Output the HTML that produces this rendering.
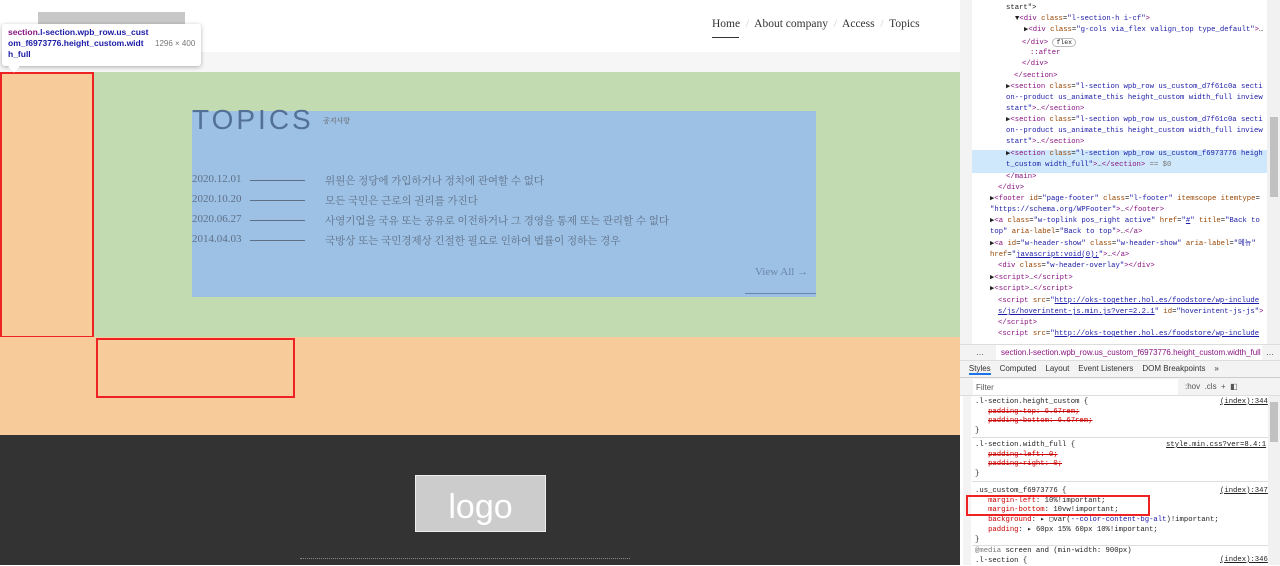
<!DOCTYPE html>
<html><head><meta charset="utf-8"><style>
*{margin:0;padding:0;box-sizing:border-box}
body{width:1280px;height:565px;overflow:hidden;position:relative;background:#fff;font-family:"Liberation Serif","Noto Serif CJK SC",serif}
.a{position:absolute}
.m{font-family:"Liberation Mono","DejaVu Sans Mono",monospace;font-size:7.25px;line-height:11px;white-space:pre;color:#222}
.t{color:#881280}.n{color:#994500}.v{color:#1a1aa6}.g{color:#777}.u{color:#1a1aa6;text-decoration:underline}
.row{position:absolute;left:192px;font-size:11px;color:#5e6f87}
.d{position:absolute;left:250px;width:55px;height:1px;background:#5e6f87;top:7px}
</style></head><body>
<!-- header -->
<div class="a" style="left:0;top:0;width:960px;height:52px;background:#fff"></div>
<div class="a" style="left:0;top:52px;width:960px;height:20px;background:#f6f6f6"></div>
<div class="a" style="left:38px;top:12px;width:147px;height:30px;background:#c8c8c8"></div>
<div class="a" style="left:712px;top:18px;font-size:11.5px;color:#333;white-space:nowrap">Home <span style="color:#ccc">&nbsp;/&nbsp;</span> About company <span style="color:#ccc">&nbsp;/&nbsp;</span> Access <span style="color:#ccc">&nbsp;/&nbsp;</span> Topics</div>
<div class="a" style="left:712px;top:37px;width:27px;height:1px;background:#333"></div>
<!-- section -->
<div class="a" style="left:0;top:72px;width:960px;height:266px;background:#c2dbb1"></div>
<div class="a" style="left:0;top:72px;width:94px;height:266px;background:#f8cb9b;border:2px solid #e22"></div>
<div class="a" style="left:0;top:337px;width:960px;height:98px;background:#f8cb9b"></div>
<div class="a" style="left:96px;top:338px;width:199px;height:60px;border:2px solid #e22"></div>
<div class="a" style="left:192px;top:111px;width:624px;height:186px;background:#9dc1e4"></div>
<div class="a" style="left:192px;top:104px;font-family:'Liberation Sans',sans-serif;font-size:28px;letter-spacing:3px;color:#527195">TOPICS</div>
<div class="a" style="left:323px;top:116px;font-size:7px;color:#555;font-family:'Noto Serif CJK SC',serif">공지사항</div>
<div class="row" style="top:173px">2020.12.01</div><div class="d" style="top:180px"></div><div class="row" style="left:325px;top:173px;font-family:'Noto Serif CJK SC',serif;font-size:10.5px">위원은 정당에 가입하거나 정치에 관여할 수 없다</div>
<div class="row" style="top:193px">2020.10.20</div><div class="d" style="top:200px"></div><div class="row" style="left:325px;top:193px;font-family:'Noto Serif CJK SC',serif;font-size:10.5px">모든 국민은 근로의 권리를 가진다</div>
<div class="row" style="top:213px">2020.06.27</div><div class="d" style="top:220px"></div><div class="row" style="left:325px;top:213px;font-family:'Noto Serif CJK SC',serif;font-size:10.5px">사영기업을 국유 또는 공유로 이전하거나 그 경영을 통제 또는 관리할 수 없다</div>
<div class="row" style="top:233px">2014.04.03</div><div class="d" style="top:240px"></div><div class="row" style="left:325px;top:233px;font-family:'Noto Serif CJK SC',serif;font-size:10.5px">국방상 또는 국민경제상 긴절한 필요로 인하여 법률이 정하는 경우</div>
<div class="a" style="left:755px;top:266px;font-size:11px;color:#6a85a6">View All →</div>
<div class="a" style="left:745px;top:293px;width:71px;height:1px;background:#6a85a6"></div>
<!-- footer -->
<div class="a" style="left:0;top:435px;width:960px;height:130px;background:#333"></div>
<div class="a" style="left:415px;top:475px;width:131px;height:57px;background:#ccc;border:1px solid #eee;color:#fff;font-family:'Liberation Sans',sans-serif;font-size:34px;text-align:center;line-height:62px">logo</div>
<div class="a" style="left:300px;top:558px;width:330px;height:4px;border-top:1px dotted #888"></div>
<!-- tooltip -->
<div class="a" style="left:2px;top:24px;width:199px;height:42px;background:#fff;border-radius:3px;box-shadow:0 1px 4px rgba(0,0,0,.3);font-family:'Liberation Sans',sans-serif;font-size:8.5px;line-height:11px;font-weight:bold;color:#1a1aa6;padding:3px 6px"><span style="color:#881280">section</span>.l-section.wpb_row.us_cust<br>om_f6973776.height_custom.widt<br>h_full<span class="a" style="left:153px;top:14px;font-weight:normal;color:#777;font-size:8px">1296 × 400</span></div>
<div class="a" style="left:10px;top:63px;width:8px;height:8px;background:#fff;transform:rotate(45deg)"></div>
<!-- devtools -->
<div class="a" style="left:960px;top:0;width:320px;height:565px;background:#fff"></div>
<div class="a" style="left:960px;top:0;width:12px;height:345px;background:#f3f3f3"></div>
<div class="a" style="left:1267px;top:0;width:13px;height:345px;background:#f1f1f1"></div>
<div class="a" style="left:1270px;top:117px;width:8px;height:80px;background:#c1c1c1"></div>
<div class="a" style="left:972px;top:150px;width:295px;height:23px;background:#cfe8fc"></div>
<div class="m a" style="left:1006px;top:3px">start"&gt;</div>
<div class="m a" style="left:1015px;top:14px">▼<span class="t">&lt;div </span><span class="n">class</span>=<span class="v">"l-section-h i-cf"</span><span class="t">&gt;</span></div>
<div class="m a" style="left:1024px;top:25px">▶<span class="t">&lt;div </span><span class="n">class</span>=<span class="v">"g-cols via_flex valign_top type_default"</span><span class="t">&gt;</span>…</div>
<div class="m a" style="left:1022px;top:37px"><span class="t">&lt;/div&gt;</span> <span style="border:1px solid #bbb;border-radius:6px;padding:0 3px;font-size:6.5px">flex</span></div>
<div class="m a" style="left:1030px;top:48px"><span class="t">::after</span></div>
<div class="m a" style="left:1022px;top:59px"><span class="t">&lt;/div&gt;</span></div>
<div class="m a" style="left:1014px;top:71px"><span class="t">&lt;/section&gt;</span></div>
<div class="m a" style="left:1006px;top:82px">▶<span class="t">&lt;section </span><span class="n">class</span>=<span class="v">"l-section wpb_row us_custom_d7f61c0a secti
on--product us_animate_this height_custom width_full inview
start"</span><span class="t">&gt;</span>…<span class="t">&lt;/section&gt;</span></div>
<div class="m a" style="left:1006px;top:115px">▶<span class="t">&lt;section </span><span class="n">class</span>=<span class="v">"l-section wpb_row us_custom_d7f61c0a secti
on--product us_animate_this height_custom width_full inview
start"</span><span class="t">&gt;</span>…<span class="t">&lt;/section&gt;</span></div>
<div class="m a" style="left:1006px;top:149px">▶<span class="t">&lt;section </span><span class="n">class</span>=<span class="v">"l-section wpb_row us_custom_f6973776 heigh
t_custom width_full"</span><span class="t">&gt;</span>…<span class="t">&lt;/section&gt;</span> <span class="g">== $0</span></div>
<div class="m a" style="left:1006px;top:172px"><span class="t">&lt;/main&gt;</span></div>
<div class="m a" style="left:998px;top:183px"><span class="t">&lt;/div&gt;</span></div>
<div class="m a" style="left:990px;top:194px">▶<span class="t">&lt;footer </span><span class="n">id</span>=<span class="v">"page-footer"</span> <span class="n">class</span>=<span class="v">"l-footer"</span> <span class="n">itemscope itemtype</span>=
<span class="v">"https://schema.org/WPFooter"</span><span class="t">&gt;</span>…<span class="t">&lt;/footer&gt;</span></div>
<div class="m a" style="left:990px;top:216px">▶<span class="t">&lt;a </span><span class="n">class</span>=<span class="v">"w-toplink pos_right active"</span> <span class="n">href</span>=<span class="v">"<u>#</u>"</span> <span class="n">title</span>=<span class="v">"Back to
top"</span> <span class="n">aria-label</span>=<span class="v">"Back to top"</span><span class="t">&gt;</span>…<span class="t">&lt;/a&gt;</span></div>
<div class="m a" style="left:990px;top:239px">▶<span class="t">&lt;a </span><span class="n">id</span>=<span class="v">"w-header-show"</span> <span class="n">class</span>=<span class="v">"w-header-show"</span> <span class="n">aria-label</span>=<span class="v">"메뉴"</span>
<span class="n">href</span>=<span class="v">"<u>javascript:void(0);</u>"</span><span class="t">&gt;</span>…<span class="t">&lt;/a&gt;</span></div>
<div class="m a" style="left:998px;top:261px"><span class="t">&lt;div </span><span class="n">class</span>=<span class="v">"w-header-overlay"</span><span class="t">&gt;&lt;/div&gt;</span></div>
<div class="m a" style="left:990px;top:273px">▶<span class="t">&lt;script&gt;</span>…<span class="t">&lt;/script&gt;</span>
▶<span class="t">&lt;script&gt;</span>…<span class="t">&lt;/script&gt;</span></div>
<div class="m a" style="left:998px;top:296px"><span class="t">&lt;script </span><span class="n">src</span>=<span class="v">"<u>http://oks-together.hol.es/foodstore/wp-include
s/js/hoverintent-js.min.js?ver=2.2.1</u>"</span> <span class="n">id</span>=<span class="v">"hoverintent-js-js"</span><span class="t">&gt;</span>
<span class="t">&lt;/script&gt;</span>
<span class="t">&lt;script </span><span class="n">src</span>=<span class="v">"<u>http://oks-together.hol.es/foodstore/wp-include</u></span></div>
<!-- breadcrumb -->
<div class="a" style="left:960px;top:344px;width:320px;height:17px;background:#f3f3f3;border-top:1px solid #ddd;border-bottom:1px solid #ddd;font-family:'Liberation Sans',sans-serif;font-size:8px;line-height:15px;color:#333"><span style="margin-left:16px">…</span><span class="a" style="left:36px;top:0;width:266px;height:15px;background:#fff;padding-left:5px;color:#881280">section.l-section.wpb_row.us_custom_f6973776.height_custom.width_full</span><span class="a" style="left:306px;top:0">…</span></div>
<div class="a" style="left:960px;top:361px;width:320px;height:17px;background:#f3f3f3;border-bottom:1px solid #ccc;font-family:'Liberation Sans',sans-serif;font-size:8px;line-height:16px;color:#333;white-space:pre">    <span style="border-bottom:2px solid #1a73e8">Styles</span>    Computed    Layout    Event Listeners    DOM Breakpoints    »</div>
<div class="a" style="left:960px;top:378px;width:320px;height:18px;background:#f3f3f3;border-bottom:1px solid #ddd;font-family:'Liberation Sans',sans-serif;font-size:8px;line-height:17px;color:#555"><span class="a" style="left:13px;top:1px;width:205px;height:16px;background:#fff;padding-left:3px">Filter</span><span class="a" style="left:225px">:hov &nbsp;.cls &nbsp;+ &nbsp;◧</span></div>
<div class="a" style="left:963px;top:396px;width:8px;height:169px;background:#f3f3f3"></div>
<div class="a" style="left:1268px;top:396px;width:12px;height:169px;background:#f1f1f1"></div>
<div class="a" style="left:1270px;top:402px;width:8px;height:40px;background:#c1c1c1"></div>
<div class="m a" style="left:975px;top:398px;line-height:9.7px">.l-section.height_custom {
   <s style="color:#c80000">padding-top: 6.67rem;</s>
   <s style="color:#c80000">padding-bottom: 6.67rem;</s>
}</div>
<div class="m a" style="left:1220px;top:398px;line-height:9.7px;text-decoration:underline">(index):344</div>
<div class="a" style="left:972px;top:437px;width:296px;height:1px;background:#ddd"></div>
<div class="m a" style="left:975px;top:441px;line-height:9.7px">.l-section.width_full {
   <s style="color:#c80000">padding-left: 0;</s>
   <s style="color:#c80000">padding-right: 0;</s>
}</div>
<div class="m a" style="left:1166px;top:441px;line-height:9.7px;text-decoration:underline">style.min.css?ver=8.4:1</div>
<div class="a" style="left:972px;top:481px;width:296px;height:1px;background:#ddd"></div>
<div class="m a" style="left:975px;top:487px;line-height:9.7px">.us_custom_f6973776 {
   <span style="color:#c80000">margin-left</span>: 10%!important;
   <span style="color:#c80000">margin-bottom</span>: 10vw!important;
   <span style="color:#c80000">background</span>: ▸ ▢var(<span class="v">--color-content-bg-alt</span>)!important;
   <span style="color:#c80000">padding</span>: ▸ 60px 15% 60px 10%!important;
}</div>
<div class="m a" style="left:1220px;top:487px;line-height:9.7px;text-decoration:underline">(index):347</div>
<div class="a" style="left:966px;top:495px;width:184px;height:21px;border:2px solid #e22"></div>
<div class="a" style="left:972px;top:545px;width:296px;height:1px;background:#ddd"></div>
<div class="m a" style="left:975px;top:547px;line-height:9.7px"><span class="g">@media</span> screen and (min-width: 900px)
.l-section {</div>
<div class="m a" style="left:1220px;top:556px;line-height:9.7px;text-decoration:underline">(index):346</div>
</body></html>
